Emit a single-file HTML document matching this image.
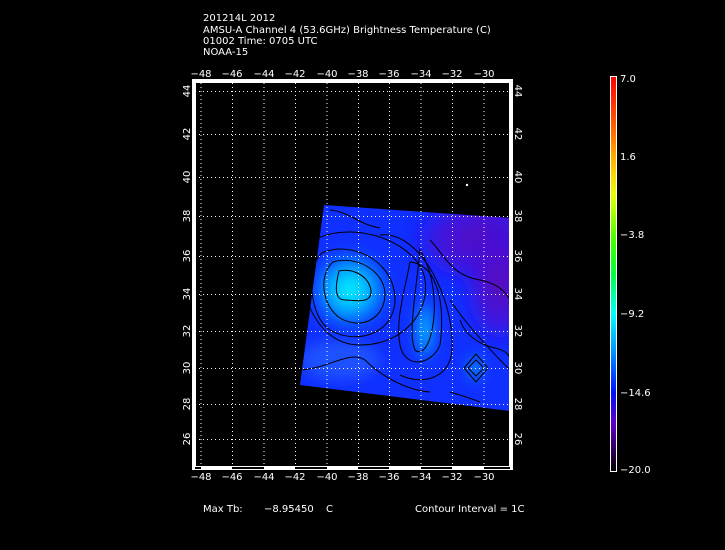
<!DOCTYPE html>
<html><head><meta charset="utf-8"><style>
html,body{margin:0;padding:0;background:#000;}
svg{display:block}
text{font-family:"DejaVu Sans","Liberation Sans",sans-serif;fill:#fff;font-size:10px;}
</style></head><body>
<svg width="725" height="550" viewBox="0 0 725 550" xmlns="http://www.w3.org/2000/svg">
<defs>
<linearGradient id="cb" x1="0" y1="0" x2="0" y2="1">
<stop offset="0" stop-color="#ff0000"/>
<stop offset="0.12" stop-color="#ff5a00"/>
<stop offset="0.24" stop-color="#ffd000"/>
<stop offset="0.30" stop-color="#e8ff00"/>
<stop offset="0.42" stop-color="#40ff00"/>
<stop offset="0.50" stop-color="#00ff40"/>
<stop offset="0.60" stop-color="#00ffff"/>
<stop offset="0.70" stop-color="#0090ff"/>
<stop offset="0.80" stop-color="#0010ff"/>
<stop offset="0.88" stop-color="#6000c0"/>
<stop offset="1" stop-color="#000000"/>
</linearGradient>
<radialGradient id="cy" cx="0.5" cy="0.5" r="0.5">
<stop offset="0" stop-color="#00ffff"/>
<stop offset="0.5" stop-color="#00b8ff" stop-opacity="0.85"/>
<stop offset="1" stop-color="#0050ff" stop-opacity="0"/>
</radialGradient>
<radialGradient id="pu" cx="0.5" cy="0.5" r="0.5">
<stop offset="0" stop-color="#5a08b8"/>
<stop offset="0.6" stop-color="#4a10d8" stop-opacity="0.8"/>
<stop offset="1" stop-color="#2010f0" stop-opacity="0"/>
</radialGradient>
<clipPath id="sw"><polygon points="324,205 510,218 510,411 300,385"/></clipPath>
<filter id="bl"><feGaussianBlur stdDeviation="6"/></filter>
</defs>

<text x="203" y="21">201214L 2012</text>
<text x="203" y="33">AMSU-A Channel 4 (53.6GHz) Brightness Temperature (C)</text>
<text x="203" y="44">01002 Time: 0705 UTC</text>
<text x="203" y="55">NOAA-15</text>

<g clip-path="url(#sw)">
<rect x="290" y="200" width="230" height="220" fill="#1030ff"/>
<g filter="url(#bl)">
<ellipse cx="485" cy="240" rx="80" ry="50" fill="url(#pu)"/>
<ellipse cx="500" cy="285" rx="40" ry="65" fill="url(#pu)"/>
<ellipse cx="350" cy="290" rx="45" ry="45" fill="url(#cy)"/>
<ellipse cx="425" cy="330" rx="14" ry="40" fill="url(#cy)" opacity="0.7"/>
<ellipse cx="475" cy="368" rx="12" ry="18" fill="url(#cy)" opacity="0.5"/>
<ellipse cx="340" cy="360" rx="40" ry="20" fill="#2a70ff" opacity="0.5"/>
</g>
<g fill="none" stroke="#000" stroke-width="1">
<path d="M339,271 C352,268 368,275 371,290 C372,305 355,300 345,300 C333,300 336,283 339,271Z"/>
<path d="M333,262 C355,255 385,270 385,295 C384,320 360,330 340,318 C322,306 318,275 333,262Z"/>
<path d="M322,253 C350,240 395,260 395,300 C394,335 355,345 330,330 C310,318 305,268 322,253Z"/>
<path d="M318,238 C360,220 420,245 425,280 C430,310 405,345 360,345 C320,345 300,300 303,265 Z"/>
<path d="M420,250 C432,270 438,300 432,330 C428,350 420,355 415,350 C408,335 415,300 420,250Z"/>
<path d="M410,262 C440,265 445,310 440,345 C432,365 405,370 400,345 C395,320 405,290 410,262Z"/>
<path d="M380,235 C420,230 455,300 452,350 C450,380 420,385 400,375"/>
<path d="M450,300 C470,330 500,360 510,370"/>
<path d="M468,368 L476,360 L484,368 L476,376Z"/>
<path d="M464,368 L476,354 L488,368 L476,382Z"/>
<path d="M300,370 C330,368 350,350 365,360 C380,375 405,390 430,392"/>
<path d="M430,240 C445,255 450,275 480,280 C495,283 505,290 510,300"/>
<path d="M460,320 C465,335 480,345 495,348 C505,350 510,355 510,360"/>
<path d="M330,210 C350,212 360,225 380,228"/>
<path d="M450,392 C460,395 470,398 480,402"/>
</g>
</g>

<g stroke="#fff" stroke-width="1" stroke-dasharray="1,3">
<line x1="201" y1="83" x2="201" y2="466"/><line x1="232.5" y1="83" x2="232.5" y2="466"/>
<line x1="264" y1="83" x2="264" y2="466"/><line x1="295.5" y1="83" x2="295.5" y2="466"/>
<line x1="327" y1="83" x2="327" y2="466"/><line x1="358.5" y1="83" x2="358.5" y2="466"/>
<line x1="389.5" y1="83" x2="389.5" y2="466"/><line x1="421" y1="83" x2="421" y2="466"/>
<line x1="452.5" y1="83" x2="452.5" y2="466"/><line x1="484" y1="83" x2="484" y2="466"/>
<line x1="195" y1="91.5" x2="509" y2="91.5"/><line x1="195" y1="134.5" x2="509" y2="134.5"/>
<line x1="195" y1="177.5" x2="509" y2="177.5"/><line x1="195" y1="216.5" x2="509" y2="216.5"/>
<line x1="195" y1="256.5" x2="509" y2="256.5"/><line x1="195" y1="294.5" x2="509" y2="294.5"/>
<line x1="195" y1="331.5" x2="509" y2="331.5"/><line x1="195" y1="368.5" x2="509" y2="368.5"/>
<line x1="195" y1="404.5" x2="509" y2="404.5"/><line x1="195" y1="439.5" x2="509" y2="439.5"/>
</g>
<rect x="192.5" y="79.5" width="320" height="390" fill="none" stroke="#fff" stroke-width="1"/>
<rect x="195.5" y="82.5" width="314" height="384" fill="none" stroke="#fff" stroke-width="1"/>
<rect x="193" y="80" width="2" height="389" fill="#fff"/>
<rect x="510" y="80" width="2" height="389" fill="#fff"/>
<rect x="193" y="80" width="318" height="2" fill="#fff"/>
<g fill="#fff">
<rect x="201" y="467" width="31" height="2"/><rect x="264" y="467" width="31" height="2"/>
<rect x="327" y="467" width="31" height="2"/><rect x="389" y="467" width="32" height="2"/>
<rect x="452" y="467" width="32" height="2"/>
</g>

<g text-anchor="middle">
<text x="201" y="77">−48</text><text x="232" y="77">−46</text><text x="264" y="77">−44</text>
<text x="295" y="77">−42</text><text x="327" y="77">−40</text><text x="358" y="77">−38</text>
<text x="389" y="77">−36</text><text x="421" y="77">−34</text><text x="452" y="77">−32</text>
<text x="484" y="77">−30</text>
<text x="201" y="480">−48</text><text x="232" y="480">−46</text><text x="264" y="480">−44</text>
<text x="295" y="480">−42</text><text x="327" y="480">−40</text><text x="358" y="480">−38</text>
<text x="389" y="480">−36</text><text x="421" y="480">−34</text><text x="452" y="480">−32</text>
<text x="484" y="480">−30</text>
</g>
<g text-anchor="middle">
<text transform="translate(190,91) rotate(-90)">44</text>
<text transform="translate(190,134) rotate(-90)">42</text>
<text transform="translate(190,177) rotate(-90)">40</text>
<text transform="translate(190,216) rotate(-90)">38</text>
<text transform="translate(190,256) rotate(-90)">36</text>
<text transform="translate(190,294) rotate(-90)">34</text>
<text transform="translate(190,331) rotate(-90)">32</text>
<text transform="translate(190,368) rotate(-90)">30</text>
<text transform="translate(190,404) rotate(-90)">28</text>
<text transform="translate(190,439) rotate(-90)">26</text>
<text transform="translate(515,91) rotate(90)">44</text>
<text transform="translate(515,134) rotate(90)">42</text>
<text transform="translate(515,177) rotate(90)">40</text>
<text transform="translate(515,216) rotate(90)">38</text>
<text transform="translate(515,256) rotate(90)">36</text>
<text transform="translate(515,294) rotate(90)">34</text>
<text transform="translate(515,331) rotate(90)">32</text>
<text transform="translate(515,368) rotate(90)">30</text>
<text transform="translate(515,404) rotate(90)">28</text>
<text transform="translate(515,439) rotate(90)">26</text>
</g>
<circle cx="467" cy="185" r="1.2" fill="#fff"/>

<rect x="610.5" y="76.5" width="6" height="395" fill="url(#cb)" stroke="#fff" stroke-width="1"/>
<text x="620" y="82">7.0</text>
<text x="620" y="160">1.6</text>
<text x="620" y="238">−3.8</text>
<text x="620" y="317">−9.2</text>
<text x="620" y="396">−14.6</text>
<text x="620" y="473">−20.0</text>

<text x="203" y="512">Max Tb:</text>
<text x="264" y="512">−8.95450</text>
<text x="326" y="512">C</text>
<text x="415" y="512">Contour Interval = 1C</text>
</svg>
</body></html>
